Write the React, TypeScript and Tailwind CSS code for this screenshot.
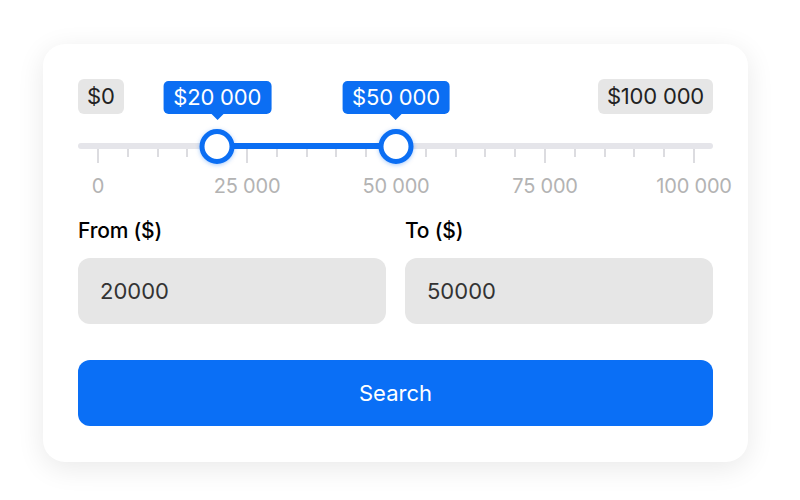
import { useState } from "react";

const MAX = 100000;
const TICKS = Array.from({ length: 21 }, (_, i) => i * 5000);
const LABELS = [0, 25000, 50000, 75000, 100000];

const fmt = (n: number) => n.toLocaleString("en-US").replace(/,/g, " ");
const pct = (n: number) => `${(n / MAX) * 100}%`;

export default function App() {
  const [from, setFrom] = useState(20000);
  const [to, setTo] = useState(50000);

  return (
    <div className="flex min-h-[500px] w-full items-start bg-white pl-[43px] pt-[44px] font-['Inter',sans-serif]">
      <div className="w-[705px] rounded-[22px] bg-white px-[35px] pb-[36px] pt-[35px] shadow-[0_6px_28px_rgba(0,0,0,0.09)]">
        {/* min / max badges, the live values float above the thumbs */}
        <div className="relative">
          <div className="flex h-[35px] items-center justify-between">
            <span className="rounded-md bg-[#e6e6e6] px-[9px] py-[3px] text-[22px] leading-[29px] tracking-[-0.2px] text-[#222]">$0</span>
            <span className="rounded-md bg-[#e6e6e6] px-[9px] py-[3px] text-[22px] leading-[29px] tracking-[-0.2px] text-[#222]">$100 000</span>
          </div>

          <div className="relative mt-[15px] h-[34px]">
            <div className="absolute left-0 right-0 top-[14px] h-[6px] rounded-full bg-[#e5e5ea]" />
            <div className="absolute left-[20px] right-[19px] top-0 h-full">
              {TICKS.map((t) => (
                <div
                  key={t}
                  className={`absolute top-[20px] w-[2px] -translate-x-1/2 bg-[#dcdce0] ${t % 25000 === 0 ? "h-[14px]" : "h-[8px]"}`}
                  style={{ left: pct(t) }}
                />
              ))}
              <div className="absolute top-[14px] h-[6px] bg-[#0b6ef3]" style={{ left: pct(from), width: `${((to - from) / MAX) * 100}%` }} />
              {[from, to].map((v) => (
                <div key={v} className="absolute top-0 -translate-x-1/2" style={{ left: pct(v) }}>
                  <div className="absolute bottom-[44px] left-1/2 -translate-x-1/2">
                    <div className="whitespace-nowrap rounded-[5px] bg-[#0b6ef3] px-[10px] py-[2px] text-[22px] leading-[29px] tracking-[-0.2px] text-white">${fmt(v)}</div>
                    <div className="mx-auto h-0 w-0 border-x-[6px] border-t-[6px] border-x-transparent border-t-[#0b6ef3]" />
                  </div>
                  <div className="h-[35px] w-[35px] rounded-full border-[5px] border-[#0b6ef3] bg-white shadow-[0_1px_4px_rgba(11,110,243,0.35)]" />
                </div>
              ))}
            </div>
          </div>

          <div className="relative ml-[20px] mr-[19px] mt-[11px] h-[24px]">
            {LABELS.map((l) => (
              <span key={l} className="absolute top-0 -translate-x-1/2 whitespace-nowrap text-[20px] leading-[24px] tracking-[-0.2px] text-[#b3b3b3]" style={{ left: pct(l) }}>
                {fmt(l)}
              </span>
            ))}
          </div>
        </div>

        <div className="mt-[20px] grid grid-cols-2 gap-[19px]">
          <label className="flex flex-col">
            <span className="text-[21px] font-medium leading-[26px] tracking-[-0.2px] text-black">From ($)</span>
            <input
              value={from}
              onChange={(e) => setFrom(Number(e.target.value) || 0)}
              className="mt-[14px] h-[66px] rounded-xl bg-[#e6e6e6] px-[22px] text-[22px] text-[#333] outline-none"
            />
          </label>
          <label className="flex flex-col">
            <span className="text-[21px] font-medium leading-[26px] tracking-[-0.2px] text-black">To ($)</span>
            <input
              value={to}
              onChange={(e) => setTo(Number(e.target.value) || 0)}
              className="mt-[14px] h-[66px] rounded-xl bg-[#e6e6e6] px-[22px] text-[22px] text-[#333] outline-none"
            />
          </label>
        </div>

        <button className="mt-[36px] h-[66px] w-full rounded-xl bg-[#0a6ff6] text-[22px] text-white">Search</button>
      </div>
    </div>
  );
}
